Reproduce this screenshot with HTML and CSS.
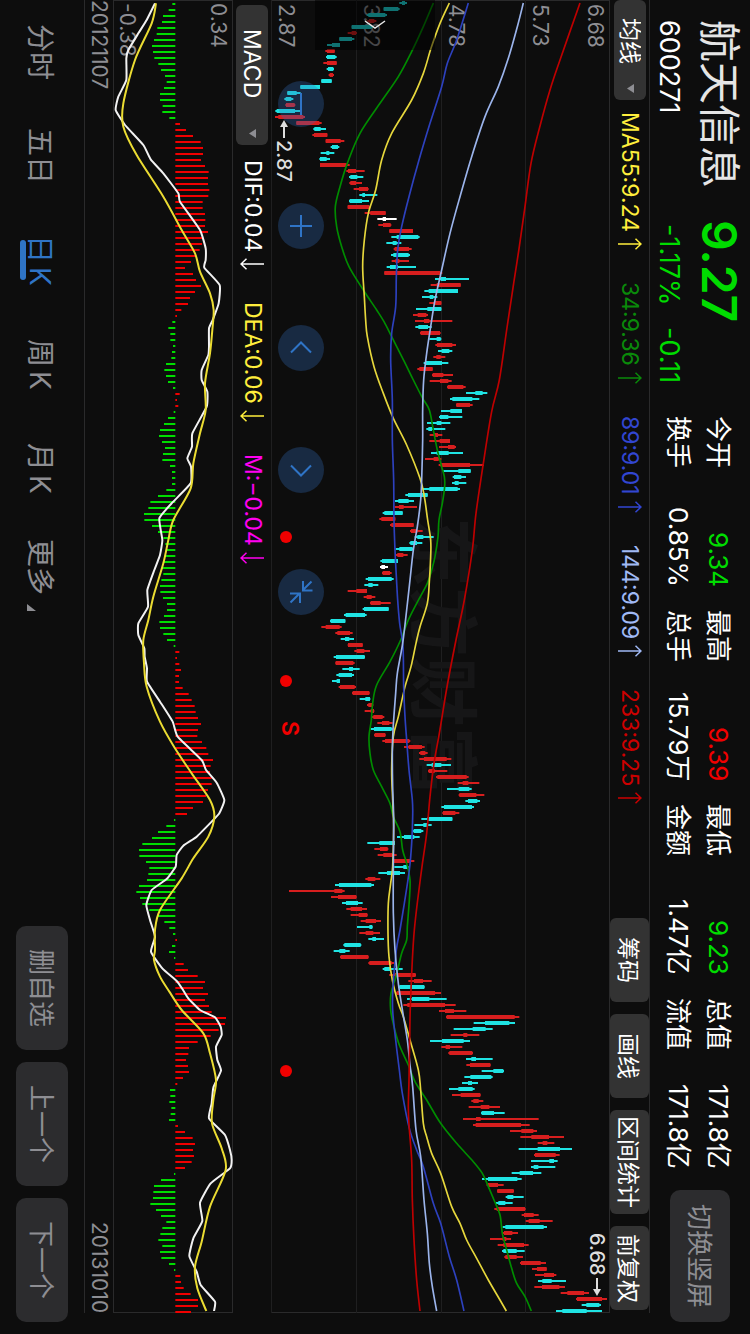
FILE: index.html
```html
<!DOCTYPE html>
<html lang="zh-CN">
<head>
<meta charset="utf-8">
<meta name="viewport" content="width=device-width, initial-scale=1">
<title>航天信息 600271</title>
<link rel="stylesheet" href="styles.css">
</head>
<body>
<svg width="0" height="0" class="defs" aria-hidden="true">
  <symbol id="arrow-up" viewBox="0 0 24 12"><path d="M0 6H23M17.500 .8L23 6l-5.500 5.200"/></symbol>
  <symbol id="arrow-down" viewBox="0 0 24 12"><path d="M24 6H1M6.500 .8L1 6l5.500 5.200"/></symbol>
</svg>
<div class="app">
  <header class="header">
    <div class="quote">
      <h1 class="name">航天信息</h1>
      <strong class="price">9.27</strong>
      <span class="code">600271</span>
      <span class="change"><span>-1.17%</span><span>-0.11</span></span>
    </div>
    <dl class="stats">
      <div class="stat"><dt>今开</dt><dd class="down">9.34</dd></div>
      <div class="stat"><dt>最高</dt><dd class="up">9.39</dd></div>
      <div class="stat"><dt>最低</dt><dd class="down">9.23</dd></div>
      <div class="stat"><dt>总值</dt><dd>171.8亿</dd></div>
      <div class="stat"><dt>换手</dt><dd>0.85%</dd></div>
      <div class="stat"><dt>总手</dt><dd>15.79万</dd></div>
      <div class="stat"><dt>金额</dt><dd>1.47亿</dd></div>
      <div class="stat"><dt>流值</dt><dd>171.8亿</dd></div>
    </dl>
    <button class="btn btn-rotate" type="button">切换竖屏</button>
  </header>

  <div class="bar bar-ma">
    <div class="picker picker-ma">
      <select aria-label="主图指标"><option>均线</option></select>
      <svg class="caret" viewBox="0 0 7 9" aria-hidden="true"><path d="M0 4.500L7 0V9z"/></svg>
    </div>
    <ul class="legend">
      <li class="ma55">MA55:9.24<svg class="arrow"><use href="#arrow-up"/></svg></li>
      <li class="ma34">34:9.36<svg class="arrow"><use href="#arrow-up"/></svg></li>
      <li class="ma89">89:9.01<svg class="arrow"><use href="#arrow-up"/></svg></li>
      <li class="ma144">144:9.09<svg class="arrow"><use href="#arrow-up"/></svg></li>
      <li class="ma233">233:9.25<svg class="arrow"><use href="#arrow-up"/></svg></li>
    </ul>
    <div class="tools">
      <button type="button">筹码</button>
      <button type="button">画线</button>
      <button type="button">区间统计</button>
      <button type="button">前复权</button>
    </div>
  </div>

  <main class="chart chart-price">
    <div class="axis">
      <div><span>6.68</span><span>5.73</span></div>
      <div><span>4.78</span></div>
      <div><span>3.82</span></div>
      <div><span>2.87</span></div>
    </div>
    <div class="watermark" aria-hidden="true">东方财富</div>
    <svg class="plot" id="price" viewBox="123 0 1017 3939" preserveAspectRatio="none" role="img" aria-label="日K线图">
      <g fill="#f00000"><circle cx="168" cy="1611" r="18"/><circle cx="168" cy="2043" r="18"/><circle cx="168" cy="3213" r="18"/></g>
    </svg>
    <span class="mark mark-low"><svg viewBox="0 0 8 18" aria-hidden="true"><path d="M4 4V18" stroke="currentColor" stroke-width="2"/><path d="M4 0l4 7H0z" fill="currentColor"/></svg>2.87</span>
    <span class="mark mark-high">6.68<svg viewBox="0 0 8 18" aria-hidden="true"><path d="M4 0V14" stroke="currentColor" stroke-width="2"/><path d="M4 18l4-7H0z" fill="currentColor"/></svg></span>
    <span class="signal">S</span>
    <button class="drawer" type="button" aria-label="展开"><svg viewBox="0 0 24 12"><path d="M2 2l10 7 10-7"/></svg></button>
    <div class="controls">
      <button type="button" aria-label="缩小"><svg viewBox="0 0 24 24"><path d="M12 1v22"/></svg></button>
      <button type="button" aria-label="放大"><svg viewBox="0 0 24 24"><path d="M12 1v22M1 12h22"/></svg></button>
      <button type="button" aria-label="左移"><svg viewBox="0 0 24 24"><path d="M2 16.500L12 6.500l10 10"/></svg></button>
      <button type="button" aria-label="右移"><svg viewBox="0 0 24 24"><path d="M2 7.500l10 10 10-10"/></svg></button>
      <button type="button" aria-label="收起"><svg viewBox="0 0 24 24"><path d="M22.500 1.500L14 10M14 1v9.500h9.500M1.500 22.500L10.500 13.500M1 13.500h10V23"/></svg></button>
    </div>
  </main>

  <div class="bar bar-macd">
    <div class="picker picker-macd">
      <select aria-label="副图指标"><option>MACD</option></select>
      <svg class="caret" viewBox="0 0 7 9" aria-hidden="true"><path d="M0 4.500L7 0V9z"/></svg>
    </div>
    <ul class="legend">
      <li class="dif">DIF:0.04<svg class="arrow"><use href="#arrow-down"/></svg></li>
      <li class="dea">DEA:0.06<svg class="arrow"><use href="#arrow-down"/></svg></li>
      <li class="macd">M:−0.04<svg class="arrow"><use href="#arrow-down"/></svg></li>
    </ul>
  </div>

  <section class="chart chart-macd" aria-label="MACD">
    <div class="range"><span>0.34</span><span>-0.38</span></div>
    <svg class="plot" id="macd" viewBox="339 0 360 3939" preserveAspectRatio="none" role="img" aria-label="MACD图"></svg>
  </section>

  <div class="dates"><time datetime="2012-11-07">20121107</time><time datetime="2013-10-10">20131010</time></div>

  <footer class="footer">
    <nav class="tabs">
      <button type="button">分时</button>
      <button type="button">五日</button>
      <button type="button" class="active" aria-current="true">日<span class="k">K</span></button>
      <button type="button">周<span class="k">K</span></button>
      <button type="button">月<span class="k">K</span></button>
      <button type="button" class="more">更多<svg viewBox="0 0 9 7" aria-hidden="true"><path d="M0 0L9 7H0z"/></svg></button>
    </nav>
    <div class="actions">
      <button class="btn" type="button">删自选</button>
      <button class="btn" type="button">上一个</button>
      <button class="btn" type="button">下一个</button>
    </div>
  </footer>
</div>
<script src="chart.js"></script>
</body>
</html>
```

FILE: styles.css
```css
* { box-sizing: border-box; margin: 0; padding: 0; }

:root {
  --bg: #0d0d0d;
  --line: #2a2a2b;
  --muted: #8e8e93;
  --panel: #2c2c2e;
  --chip: #333333;
  --green: #00dc00;
  --red: #f00000;
  --blue: #2f74c6;
}

body { background: var(--bg); overflow: hidden; }
.defs { position: absolute; }

/* The whole screen reads top to bottom, rows stack right to left. */
.app {
  writing-mode: vertical-rl;
  text-orientation: sideways;
  display: flex;
  flex-direction: column;
  block-size: 100vw;
  inline-size: 100vh;
  color: #fff;
  font-family: Inter, "Noto Sans CJK SC", sans-serif;
  font-size: 23px;
  line-height: 1;
  white-space: nowrap;
}

button, select {
  font: inherit;
  color: inherit;
  border: 0;
  background: none;
  writing-mode: inherit;
  text-orientation: inherit;
  white-space: nowrap;
}

ul { list-style: none; }

.btn {
  background: var(--panel);
  color: var(--muted);
  border-radius: 10px;
  font-size: 26px;
  padding-block-start: 2px;
}

/* Header */
.header {
  flex: none;
  block-size: 100px;
  display: flex;
  align-items: center;
  padding-inline: 20px 12px;
}
.quote {
  flex: none;
  inline-size: 396px;
  display: grid;
  grid-template-columns: 200px 1fr;
  grid-template-rows: 62px 38px;
  align-items: center;
}
.name { font-size: 42px; font-weight: 400; color: #e5e5e5; }
.price { font-size: 48px; font-weight: 600; color: var(--green); }
.code { font-size: 27px; }
.change { display: flex; gap: 21px; font-size: 27px; color: var(--green); padding-inline-start: 4px; }
.stats {
  flex: 1;
  align-self: flex-start;
  display: grid;
  grid-template-columns: repeat(4, 1fr);
  grid-auto-rows: 40px;
  column-gap: 23px;
  padding-block-start: 12px;
  font-size: 26px;
}
.stat { display: flex; justify-content: space-between; align-items: center; }
.up { color: var(--red); }
.down { color: var(--green); }
.btn-rotate { inline-size: 132px; block-size: 60px; margin-inline-start: 21px; }

/* Indicator bars */
.bar { flex: none; display: flex; align-items: center; margin-inline-end: 21px; }
.bar-ma { block-size: 40px; border-block-start: 1px solid var(--line); }
.bar-macd { block-size: 38px; padding-inline-start: 5px; }
.picker { position: relative; flex: none; block-size: 32px; }
.picker-ma { inline-size: 100px; }
.picker-macd { inline-size: 140px; }
.picker select {
  appearance: none;
  inline-size: 100%;
  block-size: 100%;
  background: var(--chip);
  border-radius: 6px;
  padding-inline-start: 18px;
  padding-block-start: 5px;
}
.picker-macd select { padding-inline-start: 24px; }
.caret { position: absolute; inset-inline-end: 7px; left: 13px; width: 7px; height: 9px; fill: var(--muted); }
.legend { display: flex; gap: 32px; padding-inline-start: 12px; }
.bar-macd .legend { padding-inline-start: 15px; }
.legend li { display: flex; align-items: center; gap: 6px; }
.arrow { width: 24px; height: 12px; fill: none; stroke: currentColor; stroke-width: 1.5; }
.ma55, .dea { color: #ffee3c; }
.ma34 { color: #0a8a0a; }
.ma89 { color: #3246d2; }
.ma144 { color: #a0b9f5; }
.ma233 { color: #cd0000; }
.macd { color: #ff00f0; }
.tools { display: flex; gap: 12px; margin-inline-start: auto; padding-inline-end: 3px; block-size: 100%; }
.tools button { min-inline-size: 84px; padding: 4px 0 0; padding-block: 4px 0; padding-inline: 6px; background: var(--chip); border-radius: 6px; }

/* Charts */
.chart { position: relative; margin-inline-end: 21px; box-shadow: inset 0 0 0 1px var(--line); }
.chart-price { flex: 339 1 0; }
.chart-macd { flex: 120 1 0; }
.plot { position: absolute; inset: 0; width: 100%; height: 100%; fill: none; }
.axis { display: grid; grid-template-rows: repeat(4, 1fr); block-size: 100%; color: var(--muted); font-size: 21px; }
.axis div {
  display: flex;
  flex-direction: column;
  justify-content: flex-end;
  border-block-end: 1px solid #1f1f20;
  padding: 4px;
}
.axis div:first-child { justify-content: space-between; }
.range {
  display: flex;
  flex-direction: column;
  justify-content: space-between;
  block-size: 100%;
  padding: 3px 4px;
  color: var(--muted);
  font-size: 21px;
}
.watermark {
  position: absolute;
  left: 136px;
  top: 517px;
  color: #161617;
  font-size: 70px;
  font-weight: 700;
}
.mark {
  position: absolute;
  display: flex;
  align-items: center;
  gap: 2px;
  color: #dedede;
  font-size: 20px;
  font-weight: 500;
}
.mark svg { width: 8px; height: 18px; }
.mark-low { left: 3px; top: 120px; }
.mark-high { right: 3px; bottom: 17px; }
.signal { position: absolute; left: 7px; top: 721px; color: var(--red); font-size: 23px; font-weight: 600; }
.drawer {
  position: absolute;
  left: 44px;
  top: 0;
  width: 120px;
  height: 50px;
  background: rgba(0, 0, 0, .5);
}
.drawer svg { display: block; margin: auto; width: 24px; height: 12px; fill: none; stroke: #e8e8e8; stroke-width: 1.5; }
.controls { position: absolute; left: 7px; top: 81px; display: flex; gap: 76px; }
.controls button {
  display: grid;
  place-items: center;
  width: 46px;
  height: 46px;
  border-radius: 50%;
  background: rgba(50, 110, 190, .3);
}
.controls svg { width: 24px; height: 24px; fill: none; stroke: var(--blue); stroke-width: 2; }

/* Dates */
.dates {
  flex: none;
  block-size: 29px;
  display: flex;
  justify-content: space-between;
  align-items: center;
  margin-inline-end: 21px;
  border-block-end: 1px solid var(--line);
  color: var(--muted);
  font-size: 21px;
}

/* Footer */
.footer {
  flex: none;
  block-size: 84px;
  display: flex;
  align-items: center;
  justify-content: space-between;
  padding-inline-end: 12px;
}
.tabs { display: flex; }
.tabs button { position: relative; inline-size: 104px; block-size: 52px; padding-block-start: 4px; color: var(--muted); font-size: 28px; }
.tabs .active { color: var(--blue); }
.tabs .active::after {
  content: "";
  position: absolute;
  left: 4px;
  top: 32px;
  width: 6px;
  height: 40px;
  border-radius: 3px;
  background: currentColor;
}
.k { margin-inline-start: 4px; }
.tabs .more { padding-inline-end: 10px; }
.more svg { position: absolute; left: 11px; bottom: 13px; width: 9px; height: 7px; fill: currentColor; }
.actions { display: flex; gap: 12px; }
.actions .btn { inline-size: 124px; block-size: 52px; }
```

FILE: chart.js
```js
// One bar every STEP units down the screen; values run along x.
const STEP = 18;

// colour (c = down, r = up, w = flat), low, body start, body end, high
const candles = `c508,516,525,531 c461,461,505,509 c410,415,466,471 r412,417,433,439 c365,365,425,430 r353,365,378,381 c328,328,366,373
c291,306,330,330 r286,291,314,314 c288,291,316,320 r280,291,320,320 c290,294,310,312 r296,299,309,312 c274,274,305,305 c211,211,270,270
c172,172,200,212 c163,167,184,190 r166,168,194,196 c136,140,195,210 r135,145,220,225 r199,199,268,275 c250,253,272,288 r247,252,292,292
r287,287,332,343 c302,306,324,328 c272,289,298,313 c268,270,290,300 r270,270,350,359 r349,354,378,404 c357,361,382,400 r358,361,378,396
r371,387,414,416 c388,397,405,442 c357,359,396,417 r353,353,418,421 r404,421,467,467 w442,458,468,500 r445,459,482,484 r478,478,549,549
c484,500,565,569 c469,488,500,514 r491,494,537,545 c483,490,536,540 r485,496,508,537 c470,480,504,558 r463,463,630,637 c615,632,648,717
r602,620,692,692 c583,596,684,684 c576,599,610,622 r598,612,634,634 c558,592,634,634 r549,563,589,594 r555,582,598,667 c556,565,594,605
r570,572,630,632 c598,620,632,634 r616,621,667,678 c624,635,658,667 r610,619,632,646 c581,586,636,655 r562,568,608,608 r606,608,640,669
r599,630,655,665 r651,653,700,707 c708,736,758,772 c660,667,727,748 r678,679,720,728 c633,661,696,696 c627,630,655,697 c591,620,634,661
c589,595,606,646 r599,612,624,637 r598,629,660,660 r627,654,674,678 c603,620,656,699 r585,611,626,634 r626,632,720,762 c640,685,722,722
c668,672,694,708 c666,674,686,709 c578,598,683,690 c526,534,593,593 c495,505,536,552 r494,507,521,561 c458,463,518,518 r448,454,496,496
r480,484,551,551 r540,543,562,578 c554,562,580,611 c538,541,561,577 c497,508,548,550 r497,502,520,533 c451,456,504,504 w450,454,465,474
r456,458,480,485 c407,414,485,491 c403,415,428,445 r353,379,411,411 r401,410,425,436 r420,422,452,482 c398,402,476,476 c342,347,405,410
c300,302,346,346 r274,287,329,335 r316,322,360,368 c332,345,358,372 r353,354,398,398 r373,380,403,420 c311,318,404,405 r316,317,370,374
c337,357,369,389 c319,326,366,372 c306,320,330,330 r326,330,374,378 r366,368,418,419 c389,406,420,421 r411,415,427,430 r404,422,432,433
r425,430,458,463 r442,456,478,488 c422,432,485,488 r432,434,466,467 r457,465,538,541 r522,536,576,584 r567,571,586,593 r568,582,650,664
c590,605,634,663 r594,596,614,652 r618,622,710,716 r683,698,715,748 c651,686,718,725 r686,688,739,763 c706,714,742,750 c634,642,726,732
r637,639,676,688 c574,592,667,667 c553,580,592,605 c547,551,574,580 c501,522,553,569 c412,448,495,495 r433,450,473,475 r443,460,487,500
r487,487,540,553 c493,520,533,536 c445,471,510,525 r406,413,436,451 c315,327,424,432 r177,313,337,344 r303,324,379,380 c336,348,384,398
r349,362,396,411 r362,386,412,413 r392,407,438,453 c381,418,427,428 r388,407,430,450 c415,427,438,462 c340,343,392,394 c311,328,346,359
r330,332,415,416 r415,418,485,492 c458,463,480,518 r478,495,557,558 r535,552,579,605 c505,508,583,584 r497,500,615,633 c531,546,598,650
r520,532,645,677 r627,645,672,709 r648,650,854,868 c731,765,838,855 c671,728,767,788 r662,700,712,748 c600,636,701,720 r634,647,660,697
r655,658,727,729 c708,724,738,788 r709,720,781,782 c755,790,820,822 c703,721,784,788 c696,714,726,744 c657,685,728,734 r666,692,751,752
r724,730,746,760 r716,752,778,810 c753,755,792,824 r699,738,752,926 r729,737,873,899 r840,874,910,921 r871,904,957,1002 r923,938,952,973
c866,923,990,1026 r912,915,977,989 c903,958,972,983 c903,911,925,976 c845,869,909,934 c756,774,862,875 r770,774,804,821 r801,802,851,852
c827,832,850,881 c798,805,826,848 r793,800,885,887 r875,882,911,926 r887,896,929,968 c818,826,941,951 r819,822,847,864 r780,818,829,843
r803,820,882,896 c816,820,860,884 r823,826,860,879 r870,873,932,948 r906,921,950,950 r915,942,972,979 c924,937,965,1008 r913,936,988,1005
r992,1012,1062,1077 r1038,1041,1116,1131 c1055,1069,1108,1113 c978,997,1070,1116`;

const averages = {
  '#008c00': '610,9 580,80 545,155 505,230 450,310 390,400 352,490 330,560 316,620 320,680 335,740 357,800 400,870 440,930 462,965 485,1010 523,1085 550,1140 578,1195 598,1230 610,1290 622,1350 635,1400 643,1430 644,1460 637,1510 627,1560 624,1610 615,1670 605,1710 592,1750 560,1810 535,1860 512,1920 480,1985 440,2055 428,2110 424,2160 417,2210 420,2260 430,2310 455,2360 480,2410 490,2450 510,2495 518,2550 530,2590 540,2640 538,2700 532,2780 530,2820 515,2860 498,2930 483,2980 482,3030 492,3080 508,3135 535,3195 555,3245 590,3300 632,3370 680,3430 730,3485 757,3520 775,3560 792,3600 810,3645 817,3700 830,3750 845,3805 860,3850 885,3890 904,3933',
  '#e6d73c': '658,9 630,70 603,145 580,220 545,300 485,400 455,480 437,570 415,640 403,720 398,800 403,890 407,960 412,1010 432,1100 460,1180 490,1255 530,1335 570,1435 583,1490 593,1560 602,1620 602,1670 598,1745 592,1810 570,1880 558,1930 543,2000 525,2060 505,2150 490,2210 485,2310 488,2400 491,2480 488,2600 482,2650 475,2710 474,2800 477,2870 487,2940 505,3010 520,3050 540,3120 565,3210 572,3270 580,3370 590,3410 605,3460 632,3520 665,3620 690,3670 710,3720 740,3775 775,3840 810,3900 829,3933',
  '#2d41be': '715,9 680,120 652,190 635,260 600,370 567,480 537,590 515,680 503,750 499,830 497,920 485,1000 482,1080 487,1200 487,1320 491,1440 492,1560 495,1650 498,1710 503,1800 509,1870 519,1940 521,2060 525,2150 530,2220 537,2310 547,2400 548,2450 545,2530 538,2610 523,2710 510,2790 499,2850 489,2960 488,3030 497,3120 508,3210 517,3280 538,3385 560,3450 580,3500 610,3610 632,3670 658,3770 680,3840 702,3933',
  '#9bb4eb': '880,9 862,80 835,175 805,260 765,350 725,470 690,590 660,700 635,810 615,900 602,980 590,1060 581,1140 578,1230 578,1320 575,1440 572,1500 562,1580 550,1650 540,1740 530,1830 518,1930 502,2020 497,2080 489,2190 487,2260 488,2360 491,2460 490,2600 490,2740 495,2850 505,2950 518,3035 532,3120 540,3195 548,3260 558,3390 572,3470 582,3600 592,3700 598,3790 607,3860 620,3933',
  '#be0000': '1050,9 990,180 960,270 930,378 903,490 885,620 868,740 851,850 830,990 808,1140 785,1235 760,1390 738,1540 727,1650 703,1800 678,1920 652,2055 628,2200 612,2290 600,2390 590,2500 576,2600 563,2700 553,2790 547,2880 541,3020 539,3120 537,3240 535,3320 537,3375 545,3480 547,3600 552,3720 560,3840 570,3933'
};

const ZERO = 526;
const histogram = [
  517,506,489,486,472,470,462,456,459,463,475,483,495,500,492,480,480,488,487,508,540,558,579,602,609,609,603,615,626,624,
  624,628,625,608,608,615,616,615,624,609,606,599,589,573,555,579,588,603,585,570,564,544,531,517,505,511,511,519,516,514,
  498,493,498,504,519,539,531,535,521,504,492,480,477,486,495,489,487,510,516,516,516,499,474,451,445,432,433,456,474,490,
  496,498,495,490,486,490,484,480,481,489,501,501,492,478,480,490,501,521,538,531,538,543,537,537,548,566,575,584,587,594,
  603,594,592,606,619,625,639,632,630,635,635,624,618,609,579,561,522,499,474,456,427,417,418,438,448,445,441,417,409,420,
  427,448,474,493,508,519,531,516,507,522,551,564,593,615,609,624,615,627,635,678,675,656,632,593,567,565,558,564,567,549,
  532,510,511,508,514,512,507,534,555,578,585,579,582,575,555,522,483,462,460,459,451,468,483,499,487,481,475,487,480,484,
  507,522,541,543,551,572,594,594,573
];

const oscillators = {
  '#f2f2f2': '465,10 440,60 415,100 385,150 379,175 379,240 355,290 347,330 375,375 430,435 452,478 490,520 535,580 540,605 600,690 617,745 617,780 613,803 659,855 656,910 638,960 627,985 627,1040 625,1065 605,1110 605,1140 622,1175 620,1220 577,1300 576,1340 562,1375 573,1400 572,1450 515,1510 478,1555 487,1620 480,1665 463,1710 442,1770 444,1820 415,1870 415,1905 433,1945 434,1970 441,2005 441,2045 480,2105 518,2165 533,2210 605,2280 618,2310 650,2348 673,2400 658,2440 635,2465 590,2510 550,2537 530,2565 527,2600 500,2637 455,2670 439,2715 450,2760 465,2810 453,2855 487,2905 530,2943 548,2968 565,2995 600,3030 645,3052 662,3080 665,3105 648,3140 652,3180 663,3212 640,3263 635,3310 627,3355 675,3405 690,3450 695,3480 690,3505 632,3550 600,3608 607,3663 580,3715 568,3768 590,3815 602,3855 645,3905 642,3933',
  '#ebdc32': '468,10 455,70 405,180 370,310 370,380 410,465 490,590 545,690 585,760 600,815 630,880 641,930 637,990 630,1060 615,1150 617,1230 600,1300 580,1390 572,1465 520,1560 505,1620 490,1690 460,1790 445,1860 430,1920 432,1990 440,2060 480,2165 525,2245 575,2320 630,2400 643,2450 625,2510 580,2575 545,2635 480,2730 465,2790 465,2850 462,2880 480,2930 508,2975 545,3030 610,3100 630,3160 648,3240 640,3300 636,3370 665,3445 677,3510 630,3620 605,3725 585,3800 592,3865 619,3933'
};

function addPath(svg, d, stroke, width) {
  const path = document.createElementNS('http://www.w3.org/2000/svg', 'path');
  path.setAttribute('d', d);
  path.setAttribute('stroke', stroke);
  path.setAttribute('stroke-width', width);
  path.setAttribute('stroke-linejoin', 'round');
  svg.appendChild(path);
}

// Catmull-Rom spline through the points, as cubic Béziers.
function curve(text, tension) {
  const p = text.split(' ').map(s => s.split(',').map(Number));
  let d = `M${p[0]}`;
  for (let i = 0; i < p.length - 1; i++) {
    const a = p[i - 1] || p[i], b = p[i], c = p[i + 1], e = p[i + 2] || c;
    d += `C${b[0] + (c[0] - a[0]) * tension},${b[1] + (c[1] - a[1]) * tension} `
      + `${c[0] - (e[0] - b[0]) * tension},${c[1] - (e[1] - b[1]) * tension} ${c}`;
  }
  return d;
}

const price = document.getElementById('price');
const colours = { c: '#1fe3e3', r: '#d71e1e', w: '#ffffff' };
const wicks = { c: '', r: '', w: '' };
const bodies = { c: '', r: '', w: '' };
candles.split(/\s+/).forEach((item, i) => {
  const kind = item[0];
  const [low, from, to, high] = item.slice(1).split(',').map(Number);
  const y = 9 + STEP * i;
  wicks[kind] += `M${low} ${y}H${high}`;
  bodies[kind] += `M${from} ${y}H${to}`;
});
for (const kind of ['c', 'r', 'w']) {
  addPath(price, wicks[kind], colours[kind], 6);
  addPath(price, bodies[kind], colours[kind], 12);
}
for (const [colour, points] of Object.entries(averages)) {
  addPath(price, curve(points, 1 / 6), colour, 5);
}

const macd = document.getElementById('macd');
let rise = '', fall = '';
histogram.forEach((x, i) => {
  const bar = `M${ZERO} ${12 + STEP * i}H${x}`;
  if (x > ZERO) rise += bar; else fall += bar;
});
addPath(macd, rise, '#f00000', 6);
addPath(macd, fall, '#00dc00', 6);
addPath(macd, curve(oscillators['#f2f2f2'], 1 / 14), '#f2f2f2', 6);
addPath(macd, curve(oscillators['#ebdc32'], 1 / 7), '#ebdc32', 6);
```
